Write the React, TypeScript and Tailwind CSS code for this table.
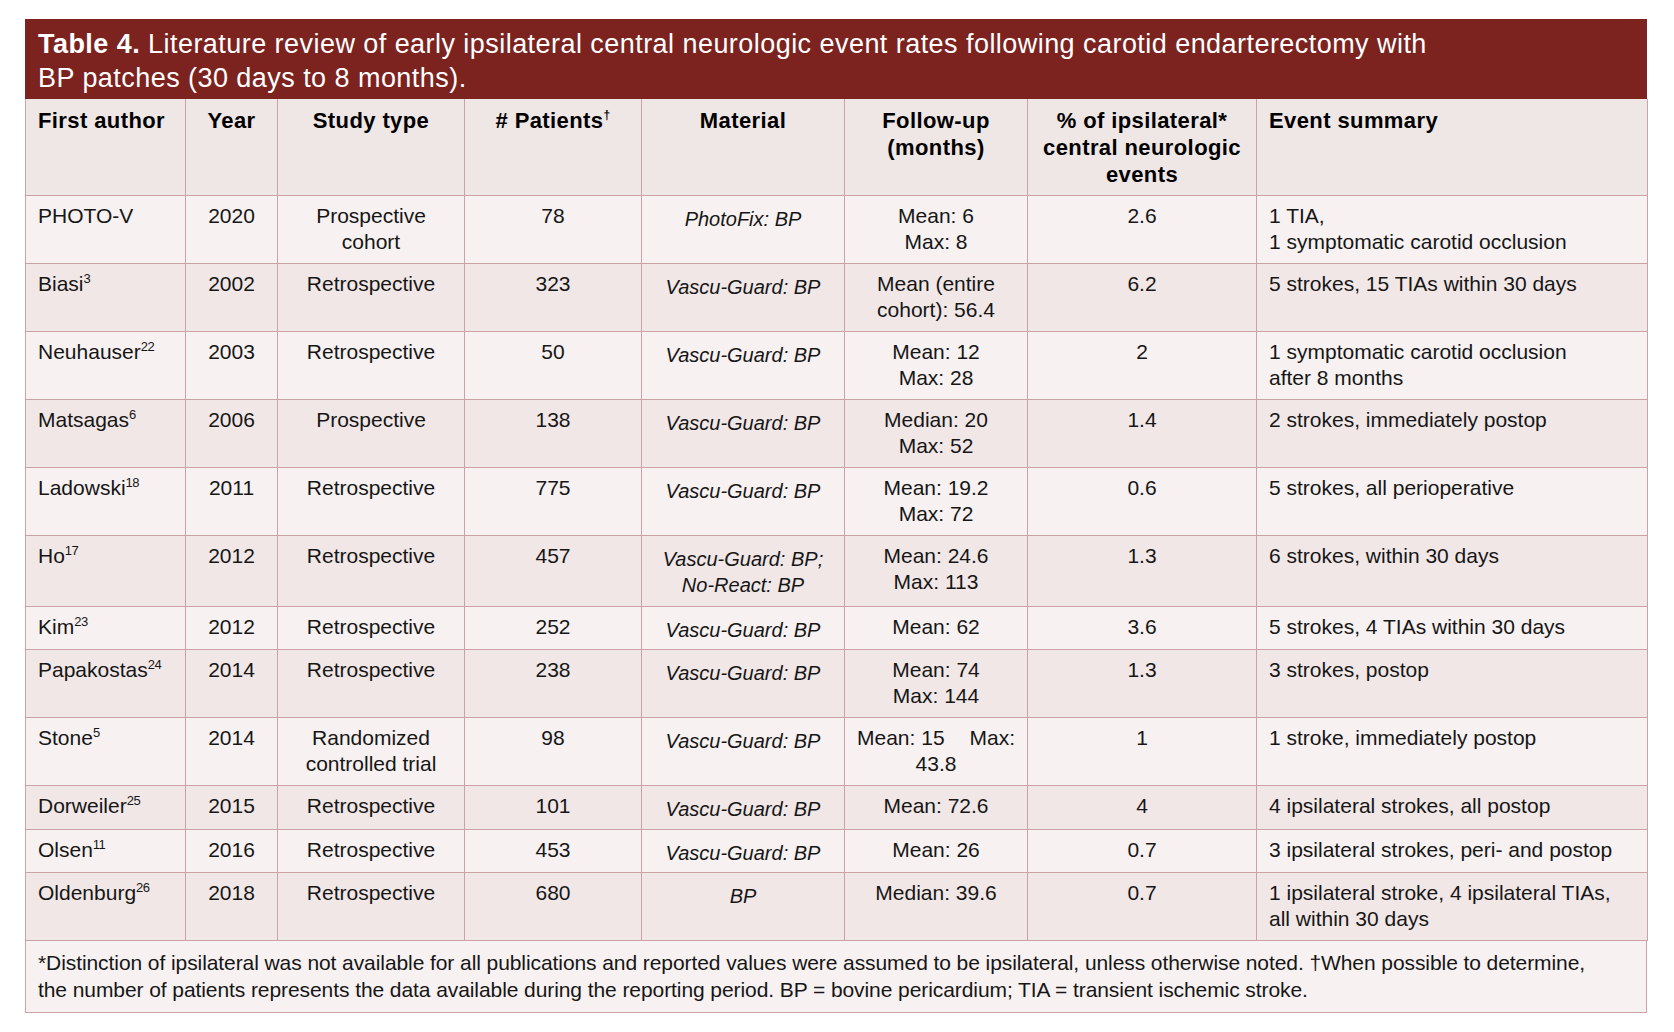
import React from "react";

type Row = {
  author: string;
  sup: string;
  year: string;
  study: React.ReactNode;
  patients: string;
  material: React.ReactNode;
  follow: React.ReactNode;
  pct: string;
  events: React.ReactNode;
  h: string;
  dark: boolean;
};

const rows: Row[] = [
  { author: "PHOTO-V", sup: "", year: "2020", study: <>Prospective<br />cohort</>, patients: "78", material: "PhotoFix: BP", follow: <>Mean: 6<br />Max: 8</>, pct: "2.6", events: <>1 TIA,<br />1 symptomatic carotid occlusion</>, h: "h-[68px]", dark: false },
  { author: "Biasi", sup: "3", year: "2002", study: "Retrospective", patients: "323", material: "Vascu-Guard: BP", follow: <>Mean (entire<br />cohort): 56.4</>, pct: "6.2", events: "5 strokes, 15 TIAs within 30 days", h: "h-[68px]", dark: true },
  { author: "Neuhauser", sup: "22", year: "2003", study: "Retrospective", patients: "50", material: "Vascu-Guard: BP", follow: <>Mean: 12<br />Max: 28</>, pct: "2", events: <>1 symptomatic carotid occlusion<br />after 8 months</>, h: "h-[68px]", dark: false },
  { author: "Matsagas", sup: "6", year: "2006", study: "Prospective", patients: "138", material: "Vascu-Guard: BP", follow: <>Median: 20<br />Max: 52</>, pct: "1.4", events: "2 strokes, immediately postop", h: "h-[68px]", dark: true },
  { author: "Ladowski", sup: "18", year: "2011", study: "Retrospective", patients: "775", material: "Vascu-Guard: BP", follow: <>Mean: 19.2<br />Max: 72</>, pct: "0.6", events: "5 strokes, all perioperative", h: "h-[68px]", dark: false },
  { author: "Ho", sup: "17", year: "2012", study: "Retrospective", patients: "457", material: <>Vascu-Guard: BP;<br />No-React: BP</>, follow: <>Mean: 24.6<br />Max: 113</>, pct: "1.3", events: "6 strokes, within 30 days", h: "h-[71px]", dark: true },
  { author: "Kim", sup: "23", year: "2012", study: "Retrospective", patients: "252", material: "Vascu-Guard: BP", follow: "Mean: 62", pct: "3.6", events: "5 strokes, 4 TIAs within 30 days", h: "h-[43px]", dark: false },
  { author: "Papakostas", sup: "24", year: "2014", study: "Retrospective", patients: "238", material: "Vascu-Guard: BP", follow: <>Mean: 74<br />Max: 144</>, pct: "1.3", events: "3 strokes, postop", h: "h-[68px]", dark: true },
  { author: "Stone", sup: "5", year: "2014", study: <>Randomized<br />controlled trial</>, patients: "98", material: "Vascu-Guard: BP", follow: <><span className="flex justify-between px-[2px]"><span>Mean: 15</span><span>Max:</span></span>43.8</>, pct: "1", events: "1 stroke, immediately postop", h: "h-[68px]", dark: false },
  { author: "Dorweiler", sup: "25", year: "2015", study: "Retrospective", patients: "101", material: "Vascu-Guard: BP", follow: "Mean: 72.6", pct: "4", events: "4 ipsilateral strokes, all postop", h: "h-[44px]", dark: true },
  { author: "Olsen", sup: "11", year: "2016", study: "Retrospective", patients: "453", material: "Vascu-Guard: BP", follow: "Mean: 26", pct: "0.7", events: "3 ipsilateral strokes, peri- and postop", h: "h-[43px]", dark: false },
  { author: "Oldenburg", sup: "26", year: "2018", study: "Retrospective", patients: "680", material: "BP", follow: "Median: 39.6", pct: "0.7", events: <>1 ipsilateral stroke, 4 ipsilateral TIAs,<br />all within 30 days</>, h: "h-[68px]", dark: true },
];

const cell = "border border-[#c9a3a5] align-top p-0";

export default function App() {
  return (
    <div className="bg-white w-[1674px] h-[1032px] pt-[19px] pl-[25px] font-['Liberation_Sans',Arial,sans-serif] text-[#161616]">
      <div className="w-[1622px]">
        <div className="bg-[#7c2320] h-[80px] text-white text-[27px] leading-[34px] pl-[13px] pt-[8px] tracking-[0.45px]">
          <span className="font-bold">Table 4.</span> Literature review of early ipsilateral central neurologic event rates following carotid endarterectomy with
          <br />
          BP patches (30 days to 8 months).
        </div>
        <table className="table-fixed border-collapse w-[1622px]">
          <colgroup>
            <col className="w-[160px]" />
            <col className="w-[92px]" />
            <col className="w-[187px]" />
            <col className="w-[177px]" />
            <col className="w-[203px]" />
            <col className="w-[183px]" />
            <col className="w-[229px]" />
            <col className="w-[391px]" />
          </colgroup>
          <thead>
            <tr className="h-[96px] bg-[#efe6e6] text-[22px] leading-[27px] font-bold text-black tracking-[0.4px]">
              <th className={`${cell} border-t-0 text-left pl-[12px] pt-[8px]`}>First author</th>
              <th className={`${cell} border-t-0 text-center pt-[8px]`}>Year</th>
              <th className={`${cell} border-t-0 text-center pt-[8px]`}>Study type</th>
              <th className={`${cell} border-t-0 text-center pt-[8px]`}>
                # Patients<sup className="text-[12px] -top-[9px]">†</sup>
              </th>
              <th className={`${cell} border-t-0 text-center pt-[8px]`}>Material</th>
              <th className={`${cell} border-t-0 text-center pt-[8px]`}>
                Follow-up
                <br />
                (months)
              </th>
              <th className={`${cell} border-t-0 text-center pt-[8px]`}>
                % of ipsilateral*
                <br />
                central neurologic
                <br />
                events
              </th>
              <th className={`${cell} border-t-0 text-left pl-[12px] pt-[8px]`}>Event summary</th>
            </tr>
          </thead>
          <tbody className="text-[21px] leading-[26px]">
            {rows.map((r) => (
              <tr key={r.author} className={`${r.h} ${r.dark ? "bg-[#f1e7e7]" : "bg-[#f7f1f1]"}`}>
                <td className={`${cell} pl-[12px] pt-[7px] text-left`}>
                  {r.author}
                  {r.sup && <sup className="text-[13px] -top-[8px] tracking-[-0.5px]">{r.sup}</sup>}
                </td>
                <td className={`${cell} pt-[7px] text-center`}>{r.year}</td>
                <td className={`${cell} pt-[7px] text-center`}>{r.study}</td>
                <td className={`${cell} pt-[7px] text-center`}>{r.patients}</td>
                <td className={`${cell} pt-[10px] text-center italic text-[20px]`}>{r.material}</td>
                <td className={`${cell} pt-[7px] px-[10px] text-center`}>{r.follow}</td>
                <td className={`${cell} pt-[7px] text-center`}>{r.pct}</td>
                <td className={`${cell} pt-[7px] pl-[12px] text-left`}>{r.events}</td>
              </tr>
            ))}
          </tbody>
        </table>
        <div className="h-[72px] bg-[#f7f1f1] border-x border-b border-[#c9a3a5] pl-[12px] pt-[8px] text-[21px] leading-[27px] tracking-[-0.08px]">
          *Distinction of ipsilateral was not available for all publications and reported values were assumed to be ipsilateral, unless otherwise noted. †When possible to determine,
          <br />
          the number of patients represents the data available during the reporting period. BP = bovine pericardium; TIA = transient ischemic stroke.
        </div>
      </div>
    </div>
  );
}
